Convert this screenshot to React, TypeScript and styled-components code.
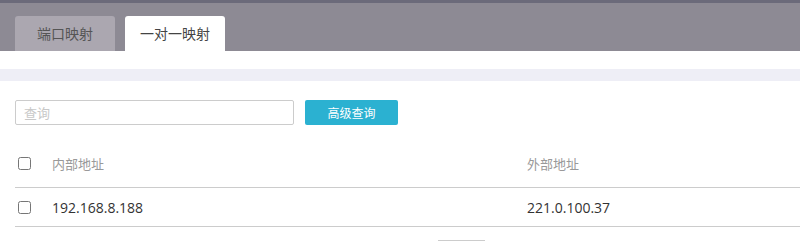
import React, { useState } from "react";
import styled, { createGlobalStyle } from "styled-components";

const GlobalStyle = createGlobalStyle`
  html, body {
    margin: 0;
    padding: 0;
    background: #ffffff;
    overflow: hidden;
  }
  body {
    font-family: "Open Sans", "Noto Sans CJK SC", sans-serif;
  }
`;

const Page = styled.div`
  width: 800px;
  height: 241px;
  position: relative;
  overflow: hidden;
`;

const TopStrip = styled.div`
  height: 3px;
  background-color: #6b6a7a;
`;

const TabBar = styled.div`
  height: 48px;
  background-color: #8d8a94;
  display: flex;
  align-items: flex-end;
  gap: 10px;
  padding-left: 15px;
`;

const Tab = styled.div<{ $active?: boolean }>`
  width: 100px;
  height: 35px;
  box-sizing: border-box;
  border-radius: 3px 3px 0 0;
  background-color: ${(p) => (p.$active ? "#ffffff" : "#aba7b0")};
  color: ${(p) => (p.$active ? "#444" : "#555")};
  font-family: "Noto Sans CJK SC", sans-serif;
  font-size: 14px;
  display: flex;
  align-items: center;
  justify-content: center;
  padding-bottom: 1px;
  cursor: pointer;
`;

const Band = styled.div`
  margin-top: 18px;
  height: 12px;
  background-color: #eeeef6;
`;

const Content = styled.div`
  padding: 19px 0 0 15px;
`;

const SearchRow = styled.div`
  display: flex;
  align-items: center;
  gap: 11px;
`;

const SearchInput = styled.input`
  width: 279px;
  height: 25px;
  box-sizing: border-box;
  border: 1px solid #cccccc;
  border-radius: 2px;
  padding: 0 8px;
  font-family: "Noto Sans CJK SC", sans-serif;
  font-size: 13px;
  color: #333;
  outline: none;
  &::placeholder {
    color: #c8c8c8;
  }
`;

const QueryButton = styled.button`
  width: 93px;
  height: 25px;
  border: 0;
  border-radius: 2px;
  background-color: #2bb1d1;
  color: #ffffff;
  font-family: "Noto Sans CJK SC", sans-serif;
  font-size: 12px;
  padding: 0;
  cursor: pointer;
`;

const Table = styled.div`
  margin-top: 14px;
`;

const Row = styled.div<{ $head?: boolean }>`
  display: grid;
  grid-template-columns: 37px 475px 1fr;
  align-items: center;
  height: ${(p) => (p.$head ? "48px" : "37px")};
  border-bottom: 1px solid #cccccc;
  padding-top: ${(p) => (p.$head ? "0" : "1px")};
`;

const CheckCell = styled.div`
  display: flex;
  align-items: center;
  padding-left: 3px;
`;

const Check = styled.input.attrs({ type: "checkbox" })`
  width: 13px;
  height: 13px;
  margin: 0;
`;

const HeadCell = styled.div`
  font-family: "Noto Sans CJK SC", sans-serif;
  font-size: 13px;
  color: #999999;
`;

const Cell = styled.div`
  font-family: "Open Sans", "Noto Sans CJK SC", sans-serif;
  font-size: 14px;
  color: #333333;
`;

const Pager = styled.div`
  position: absolute;
  left: 438px;
  top: 240px;
  width: 47px;
  height: 1px;
  background-color: #cccccc;
`;

const rows = [{ inner: "192.168.8.188", outer: "221.0.100.37" }];

const App: React.FC = () => {
  const [tab, setTab] = useState(1);
  const [query, setQuery] = useState("");

  return (
    <Page>
      <GlobalStyle />
      <TopStrip />
      <TabBar>
        <Tab $active={tab === 0} onClick={() => setTab(0)}>
          端口映射
        </Tab>
        <Tab $active={tab === 1} onClick={() => setTab(1)}>
          一对一映射
        </Tab>
      </TabBar>
      <Band />
      <Content>
        <SearchRow>
          <SearchInput
            placeholder="查询"
            value={query}
            onChange={(e) => setQuery(e.target.value)}
          />
          <QueryButton>高级查询</QueryButton>
        </SearchRow>
        <Table>
          <Row $head>
            <CheckCell>
              <Check />
            </CheckCell>
            <HeadCell>内部地址</HeadCell>
            <HeadCell>外部地址</HeadCell>
          </Row>
          {rows.map((r) => (
            <Row key={r.inner}>
              <CheckCell>
                <Check />
              </CheckCell>
              <Cell>{r.inner}</Cell>
              <Cell>{r.outer}</Cell>
            </Row>
          ))}
        </Table>
      </Content>
      <Pager />
    </Page>
  );
};

export default App;
